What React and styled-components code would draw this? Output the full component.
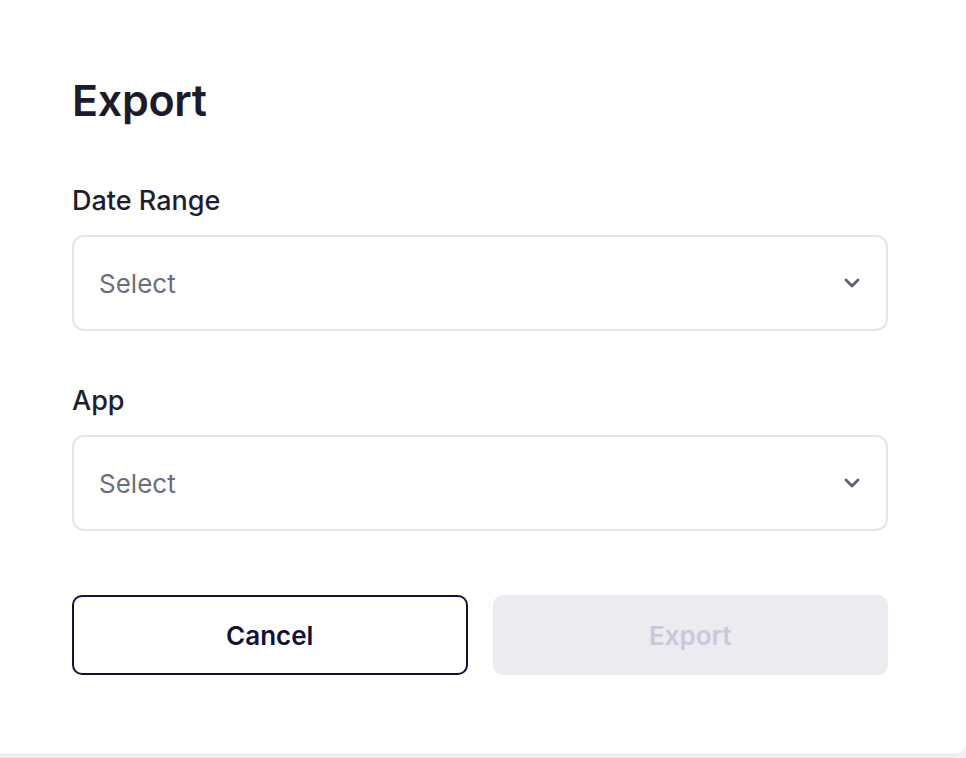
import React from "react";
import styled, { createGlobalStyle } from "styled-components";

const Global = createGlobalStyle`
  html, body { margin: 0; padding: 0; background: #f1f1f3; }
  body { font-family: Inter, "Noto Sans", sans-serif; -webkit-font-smoothing: antialiased; }
  * { box-sizing: border-box; }
`;

const Card = styled.div`
  width: 966px;
  height: 755px;
  background: #ffffff;
  border-bottom: 1px solid #e7e7ea;
  border-bottom-right-radius: 12px;
  padding: 72px 78px 0 72px;
  display: flex;
  flex-direction: column;
`;

const Title = styled.h1`
  margin: 0;
  font-size: 43px;
  font-weight: 600;
  line-height: 56px;
  color: #1c1b2b;
  letter-spacing: -0.3px;
`;

const Field = styled.div`
  display: flex;
  flex-direction: column;
  gap: 16px;
  margin-top: ${(p) => p.$top}px;
`;

const Label = styled.label`
  font-size: 27px;
  font-weight: 500;
  line-height: 36px;
  color: #1f1e30;
`;

const SelectBox = styled.div`
  height: 96px;
  border: 2px solid #e6e6ea;
  border-radius: 12px;
  display: flex;
  align-items: center;
  justify-content: space-between;
  padding: 0 26px 0 25px;
`;

const Placeholder = styled.span`
  font-size: 26px;
  color: #6b6e7c;
`;

const Actions = styled.div`
  display: grid;
  grid-template-columns: 1fr 1fr;
  gap: 25px;
  margin-top: 64px;
`;

const Button = styled.button`
  height: 80px;
  border-radius: 10px;
  font-family: inherit;
  font-size: 26px;
  font-weight: 600;
  cursor: pointer;
  border: ${(p) => (p.$primary ? "none" : "2px solid #12103a")};
  background: ${(p) => (p.$primary ? "#ebebf0" : "#ffffff")};
  color: ${(p) => (p.$primary ? "#c9c9d8" : "#12103a")};
`;

const Chevron = () => (
  <svg width="16" height="10" viewBox="0 0 16 10" fill="none">
    <path d="M2 2 L8 8 L14 2" stroke="#5f6270" strokeWidth="2.8" strokeLinecap="round" strokeLinejoin="round" />
  </svg>
);

const SelectField = ({ label, top }) => (
  <Field $top={top}>
    <Label>{label}</Label>
    <SelectBox>
      <Placeholder>Select</Placeholder>
      <Chevron />
    </SelectBox>
  </Field>
);

export default function App() {
  return (
    <>
      <Global />
      <Card>
        <Title>Export</Title>
        <SelectField label="Date Range" top={55} />
        <SelectField label="App" top={52} />
        <Actions>
          <Button>Cancel</Button>
          <Button $primary disabled>Export</Button>
        </Actions>
      </Card>
    </>
  );
}
